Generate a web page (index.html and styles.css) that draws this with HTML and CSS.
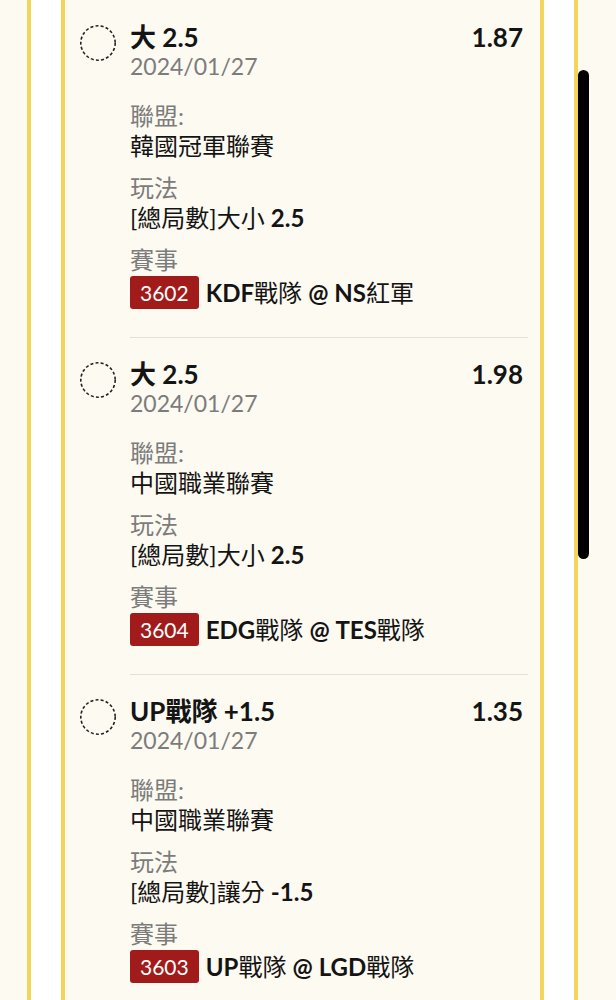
FILE: index.html
```html
<!DOCTYPE html>
<html lang="zh-Hant">
<head>
    <meta charset="UTF-8">
    <meta name="viewport" content="width=device-width, initial-scale=1.0">
    <title>注單</title>
    <link rel="stylesheet" href="styles.css">
</head>
<body>
    <div class="frame">
        <div class="sheet">

            <div class="bet">
                <svg class="radio" width="38" height="38" viewBox="0 0 38 38"><circle cx="19" cy="19" r="17.2"/></svg>
                <div class="bet-body">
                    <div class="bet-head">
                        <div>
                            <div class="pick">大 2.5</div>
                            <div class="date">2024/01/27</div>
                        </div>
                        <div class="odds">1.87</div>
                    </div>
                    <div class="group first">
                        <div class="label">聯盟:</div>
                        <div class="value">韓國冠軍聯賽</div>
                    </div>
                    <div class="group">
                        <div class="label">玩法</div>
                        <div class="value">[總局數]大小 <b>2.5</b></div>
                    </div>
                    <div class="group">
                        <div class="label">賽事</div>
                        <div class="value match"><span class="code">3602</span><span><b>KDF</b>戰隊 <b>@ NS</b>紅軍</span></div>
                    </div>
                </div>
            </div>

            <div class="bet">
                <svg class="radio" width="38" height="38" viewBox="0 0 38 38"><circle cx="19" cy="19" r="17.2"/></svg>
                <div class="bet-body">
                    <div class="bet-head">
                        <div>
                            <div class="pick">大 2.5</div>
                            <div class="date">2024/01/27</div>
                        </div>
                        <div class="odds">1.98</div>
                    </div>
                    <div class="group first">
                        <div class="label">聯盟:</div>
                        <div class="value">中國職業聯賽</div>
                    </div>
                    <div class="group">
                        <div class="label">玩法</div>
                        <div class="value">[總局數]大小 <b>2.5</b></div>
                    </div>
                    <div class="group">
                        <div class="label">賽事</div>
                        <div class="value match"><span class="code">3604</span><span><b>EDG</b>戰隊 <b>@ TES</b>戰隊</span></div>
                    </div>
                </div>
            </div>

            <div class="bet">
                <svg class="radio" width="38" height="38" viewBox="0 0 38 38"><circle cx="19" cy="19" r="17.2"/></svg>
                <div class="bet-body">
                    <div class="bet-head">
                        <div>
                            <div class="pick">UP戰隊 +1.5</div>
                            <div class="date">2024/01/27</div>
                        </div>
                        <div class="odds">1.35</div>
                    </div>
                    <div class="group first">
                        <div class="label">聯盟:</div>
                        <div class="value">中國職業聯賽</div>
                    </div>
                    <div class="group">
                        <div class="label">玩法</div>
                        <div class="value">[總局數]讓分 <b>-1.5</b></div>
                    </div>
                    <div class="group">
                        <div class="label">賽事</div>
                        <div class="value match"><span class="code">3603</span><span><b>UP</b>戰隊 <b>@ LGD</b>戰隊</span></div>
                    </div>
                </div>
            </div>

        </div>
    </div>
    <div class="scrollbar"></div>
</body>
</html>
```

FILE: styles.css
```css
body{
    margin: 0;
    padding: 0;
    background-color: #fdfaf1;
    font-family: "Lato", "Noto Sans CJK TC", sans-serif;
    color: #141414;
}

.frame{
    margin-left: 27px;
    width: 551px;
    box-sizing: border-box;
    padding: 0 30px;
    background-color: #ffffff;
    border-left: 4px solid #f3d55b;
    border-right: 4px solid #f3d55b;
}

.sheet{
    padding-top: 1px;
    background-color: #fdfaf1;
    border-left: 4px solid #f3d55b;
    border-right: 4px solid #f3d55b;
}

.bet{
    display: flex;
    align-items: flex-start;
    padding-left: 14px;
    padding-right: 12px;
}

.radio{
    flex: none;
    margin-top: 23px;
    margin-right: 13px;
}
.radio circle{
    fill: none;
    stroke: #222;
    stroke-width: 1.6;
    stroke-dasharray: 3 2.2;
}

.bet-body{
    flex: 1;
    padding-top: 22px;
    padding-bottom: 28px;
    border-bottom: 1px solid #e4e1da;
}

.bet-head{
    display: flex;
    justify-content: space-between;
}

.pick{
    font-size: 26px;
    font-weight: bold;
    line-height: 28px;
}
.odds{
    font-size: 26px;
    font-weight: bold;
    line-height: 28px;
    margin-right: 5px;
}
.date{
    font-size: 23px;
    line-height: 30px;
    color: #7c7c7c;
}

.group{
    margin-top: 12px;
}
.group.first{
    margin-top: 20px;
}
.label{
    font-size: 24px;
    line-height: 30px;
    color: #7c7c7c;
}
.value{
    font-size: 24px;
    line-height: 30px;
}

.match{
    display: flex;
    align-items: center;
    height: 33px;
    margin-top: 1px;
    gap: 7px;
}
.code{
    display: inline-block;
    height: 33px;
    line-height: 33px;
    padding: 0 10px;
    font-size: 21px;
    color: #ffffff;
    background-color: #a21b1b;
    border-radius: 3px;
}

.scrollbar{
    position: absolute;
    left: 578px;
    top: 70px;
    width: 11px;
    height: 489px;
    border-radius: 6px;
    background-color: #000;
}
```
